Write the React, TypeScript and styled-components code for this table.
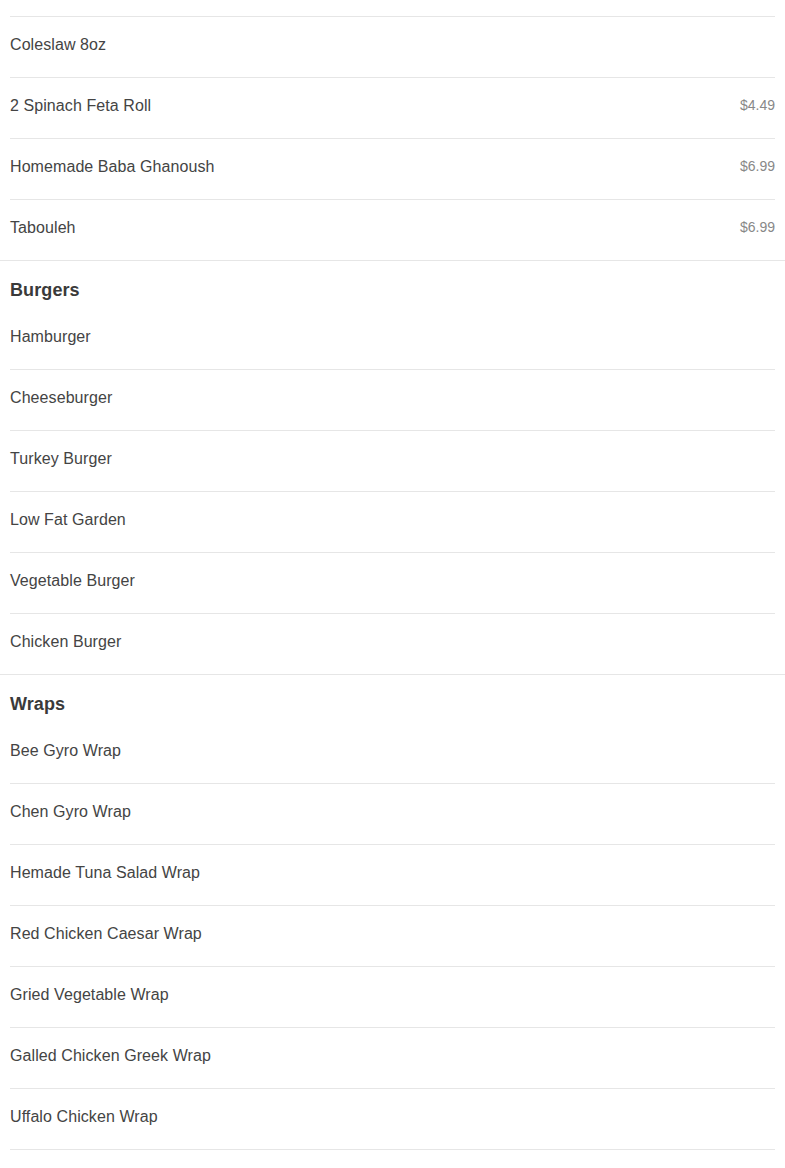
import styled, { createGlobalStyle } from 'styled-components';

const GlobalStyle = createGlobalStyle`
  html, body {
    margin: 0;
    padding: 0;
    background: #fff;
  }

  body {
    font-family: "Liberation Sans", Arial, sans-serif;
    color: #444;
  }
`;

const Menu = styled.div`
  width: 785px;
`;

const TopStub = styled.div`
  height: 16px;
  margin: 0 10px;
  border-bottom: 1px solid #e6e6e6;
`;

const Section = styled.section<{ $divider?: boolean }>`
  border-bottom: ${(p) => (p.$divider ? '1px solid #e6e6e6' : 'none')};
`;

const SectionTitle = styled.h3`
  margin: 0 0 8px;
  padding: 19px 10px 0;
  font-size: 18px;
  line-height: 21px;
  font-weight: bold;
  letter-spacing: 0.1px;
  color: #3a3a3a;
`;

const List = styled.ul`
  list-style: none;
  margin: 0;
  padding: 0 10px;
`;

const Row = styled.li<{ $last?: boolean }>`
  display: flex;
  justify-content: space-between;
  align-items: flex-start;
  padding: 19px 0 23px;
  border-bottom: ${(p) => (p.$last ? 'none' : '1px solid #e6e6e6')};
`;

const Name = styled.span`
  font-size: 16px;
  line-height: 18px;
  letter-spacing: 0.08px;
  color: #444;
`;

const Price = styled.span`
  font-size: 14px;
  line-height: 16px;
  color: #888;
`;

type Item = { name: string; price?: string };

const sides: Item[] = [
  { name: 'Coleslaw 8oz' },
  { name: '2 Spinach Feta Roll', price: '$4.49' },
  { name: 'Homemade Baba Ghanoush', price: '$6.99' },
  { name: 'Tabouleh', price: '$6.99' },
];

const burgers: Item[] = [
  { name: 'Hamburger' },
  { name: 'Cheeseburger' },
  { name: 'Turkey Burger' },
  { name: 'Low Fat Garden' },
  { name: 'Vegetable Burger' },
  { name: 'Chicken Burger' },
];

const wraps: Item[] = [
  { name: 'Bee Gyro Wrap' },
  { name: 'Chen Gyro Wrap' },
  { name: 'Hemade Tuna Salad Wrap' },
  { name: 'Red Chicken Caesar Wrap' },
  { name: 'Gried Vegetable Wrap' },
  { name: 'Galled Chicken Greek Wrap' },
  { name: 'Uffalo Chicken Wrap' },
];

function Items({ items, openEnd }: { items: Item[]; openEnd?: boolean }) {
  return (
    <List>
      {items.map((item, i) => (
        <Row key={item.name} $last={!openEnd && i === items.length - 1}>
          <Name>{item.name}</Name>
          {item.price && <Price>{item.price}</Price>}
        </Row>
      ))}
    </List>
  );
}

export default function App() {
  return (
    <>
      <GlobalStyle />
      <Menu>
        <Section $divider>
          <TopStub />
          <Items items={sides} />
        </Section>
        <Section $divider>
          <SectionTitle>Burgers</SectionTitle>
          <Items items={burgers} />
        </Section>
        <Section>
          <SectionTitle>Wraps</SectionTitle>
          <Items items={wraps} openEnd />
        </Section>
      </Menu>
    </>
  );
}
